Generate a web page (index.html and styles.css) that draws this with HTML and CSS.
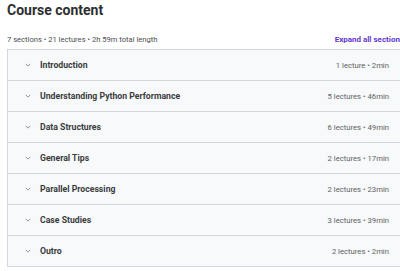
FILE: index.html
```html
<!DOCTYPE html>
<html>
<head>
    <link rel="stylesheet" href="styles.css">
</head>
<body>
    <div class="course-content">
        <h2 class="title">Course content</h2>
        <div class="summary">
            <span class="summary-text">7 sections • 21 lectures • 2h 59m total length</span>
            <button type="button" class="expand-all">Expand all sections</button>
        </div>

        <div class="sections">
            <div class="section-row">
                <svg class="chevron" viewBox="0 0 8 5" width="6" height="4"><path d="M1 1 L4 4 L7 1"/></svg>
                <span class="section-title">Introduction</span>
                <span class="section-meta">1 lecture • 2min</span>
            </div>
            <div class="section-row">
                <svg class="chevron" viewBox="0 0 8 5" width="6" height="4"><path d="M1 1 L4 4 L7 1"/></svg>
                <span class="section-title">Understanding Python Performance</span>
                <span class="section-meta">5 lectures • 46min</span>
            </div>
            <div class="section-row">
                <svg class="chevron" viewBox="0 0 8 5" width="6" height="4"><path d="M1 1 L4 4 L7 1"/></svg>
                <span class="section-title">Data Structures</span>
                <span class="section-meta">6 lectures • 49min</span>
            </div>
            <div class="section-row">
                <svg class="chevron" viewBox="0 0 8 5" width="6" height="4"><path d="M1 1 L4 4 L7 1"/></svg>
                <span class="section-title">General Tips</span>
                <span class="section-meta">2 lectures • 17min</span>
            </div>
            <div class="section-row">
                <svg class="chevron" viewBox="0 0 8 5" width="6" height="4"><path d="M1 1 L4 4 L7 1"/></svg>
                <span class="section-title">Parallel Processing</span>
                <span class="section-meta">2 lectures • 23min</span>
            </div>
            <div class="section-row">
                <svg class="chevron" viewBox="0 0 8 5" width="6" height="4"><path d="M1 1 L4 4 L7 1"/></svg>
                <span class="section-title">Case Studies</span>
                <span class="section-meta">3 lectures • 39min</span>
            </div>
            <div class="section-row">
                <svg class="chevron" viewBox="0 0 8 5" width="6" height="4"><path d="M1 1 L4 4 L7 1"/></svg>
                <span class="section-title">Outro</span>
                <span class="section-meta">2 lectures • 2min</span>
            </div>
        </div>
    </div>
</body>
</html>
```

FILE: styles.css
```css
body {
    margin: 0;
    font-family: Roboto, "Liberation Sans", sans-serif;
    color: #2d2f31;
    background: #fff;
    overflow: hidden;
}

.course-content {
    width: 397px;
    margin-left: 7px;
}

.title {
    margin: 0;
    font-size: 14px;
    line-height: 20px;
    font-weight: 700;
}

.summary {
    display: flex;
    justify-content: space-between;
    align-items: center;
    margin-top: 13px;
    height: 12px;
}

.summary-text {
    font-size: 7.6px;
    color: #4a4d50;
}

.expand-all {
    border: none;
    background: none;
    padding: 0;
    font-family: inherit;
    font-size: 8px;
    font-weight: 700;
    color: #6136d2;
    white-space: nowrap;
}

.sections {
    margin-top: 4px;
    border: 1px solid #d1d7dc;
    border-bottom: none;
}

.section-row {
    display: flex;
    align-items: center;
    height: 30px;
    padding: 0 14px 0 17px;
    background: #f7f9fa;
    border-bottom: 1px solid #d1d7dc;
}

.chevron {
    fill: none;
    stroke: #7a7f83;
    stroke-width: 1.1;
    margin-right: 9px;
}

.section-title {
    font-size: 8.7px;
    font-weight: 700;
    color: #3a3c3e;
    flex: 1;
}

.section-meta {
    font-size: 7.7px;
    color: #5d6164;
}
```
